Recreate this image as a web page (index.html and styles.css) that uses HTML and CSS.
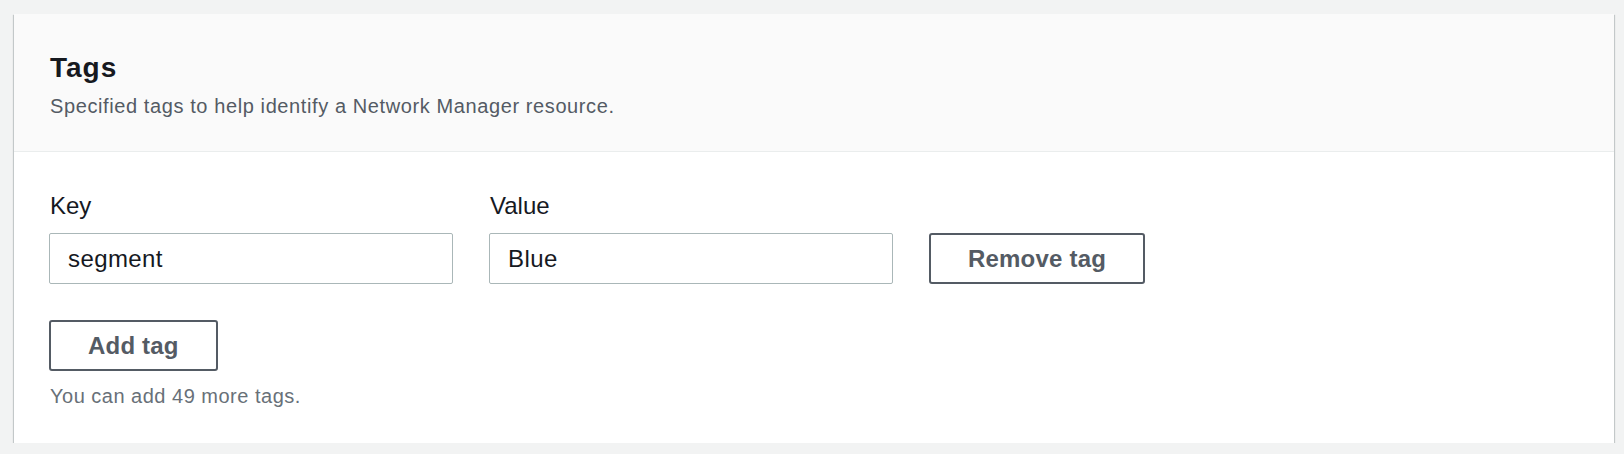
FILE: index.html
```html
<!DOCTYPE html>
<html lang="en">
<head>
<meta charset="utf-8">
<title>Tags</title>
<link rel="stylesheet" href="styles.css">
</head>
<body>
<div class="card">
  <div class="card-header">
    <h2 class="title">Tags</h2>
    <p class="desc">Specified tags to help identify a Network Manager resource.</p>
  </div>
  <div class="card-body">
    <div class="tag-row">
      <div class="field">
        <label class="label">Key</label>
        <div class="input">segment</div>
      </div>
      <div class="field">
        <label class="label">Value</label>
        <div class="input">Blue</div>
      </div>
      <button class="btn">Remove tag</button>
    </div>
    <button class="btn">Add tag</button>
    <p class="hint">You can add 49 more tags.</p>
  </div>
</div>
</body>
</html>
```
FILE: styles.css
```css
html, body {
  margin: 0;
  background: #f2f3f3;
}
body {
  padding: 14px 10px 0 14px;
  font-family: "Liberation Sans", Arial, sans-serif;
  color: #16191f;
}
.card {
  width: 1600px;
  background: #ffffff;
  box-shadow: 0 1px 1px 0 rgba(0, 28, 36, 0.3), 1px 1px 1px 0 rgba(0, 28, 36, 0.15), -1px 1px 1px 0 rgba(0, 28, 36, 0.15);
}
.card-header {
  background: #fafafa;
  border-bottom: 1px solid #eaeded;
  padding: 36px 36px 31px 36px;
}
.title {
  margin: 0;
  font-size: 28px;
  line-height: 36px;
  font-weight: 700;
  letter-spacing: 1px;
  color: #16191f;
}
.desc {
  margin: 6px 0 0 0;
  font-size: 20px;
  line-height: 28px;
  letter-spacing: 0.6px;
  color: #545b64;
}
.card-body {
  padding: 38px 36px 33px 35px;
}
.tag-row {
  display: flex;
  align-items: flex-end;
  gap: 36px;
  margin-bottom: 36px;
}
.field {
  display: flex;
  flex-direction: column;
  gap: 11px;
  width: 404px;
}
.label {
  font-size: 24px;
  line-height: 32px;
  padding-left: 1px;
  color: #16191f;
}
.input {
  box-sizing: border-box;
  height: 51px;
  border: 1px solid #aab7b8;
  border-radius: 2px;
  padding: 0 18px;
  display: flex;
  align-items: center;
  font-size: 24px;
  letter-spacing: 0.4px;
  color: #16191f;
  background: #fff;
}
.btn {
  box-sizing: border-box;
  height: 51px;
  padding: 0 37px;
  border: 2px solid #545b64;
  border-radius: 3px;
  background: #fff;
  color: #545b64;
  font-family: "Liberation Sans", Arial, sans-serif;
  font-size: 24px;
  font-weight: 700;
  letter-spacing: 0.2px;
  display: block;
}
.hint {
  margin: 11px 0 0 1px;
  font-size: 20px;
  line-height: 28px;
  letter-spacing: 0.5px;
  color: #687078;
}
```
